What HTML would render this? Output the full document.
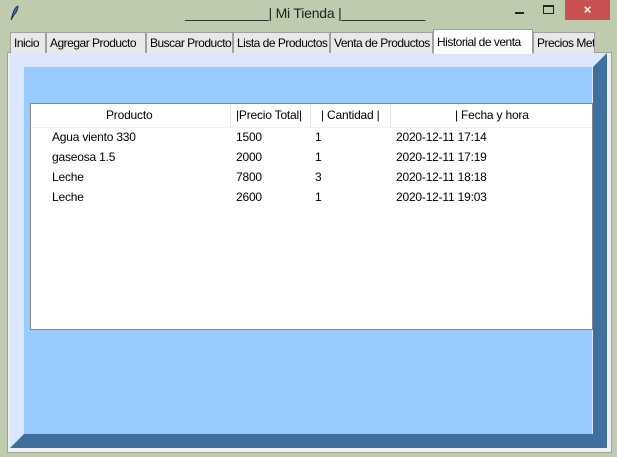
<!DOCTYPE html>
<html><head><style>
*{margin:0;padding:0;box-sizing:border-box}
body{width:617px;height:457px;background:#bfcbae;position:relative;overflow:hidden;font-family:"Liberation Sans",sans-serif;font-size:12px;color:#000}
.a{position:absolute}
.tab{position:absolute;top:32px;height:21px;background:#e8e8e8;border:1px solid #a0a0a0;border-bottom:none;font-size:12px;line-height:20px;padding-left:3px;white-space:nowrap;overflow:hidden;letter-spacing:-0.5px}
.cell{position:absolute;white-space:nowrap;font-size:12px;letter-spacing:-0.2px}
</style></head><body>
<div class="a" style="left:8px;top:5px;width:12px;height:16px">
<svg width="12" height="16"><path d="M3 15 L5 8 Q7 2 10 1 Q10 6 6 10 Z" fill="#3a6fc0" stroke="#102040" stroke-width="0.8"/></svg></div>
<div class="a" style="left:185px;top:5px;font-size:14px;color:#222;white-space:nowrap;letter-spacing:-0.2px">___________| Mi Tienda |___________</div>
<div class="a" style="left:515px;top:12px;width:9px;height:2px;background:#222"></div>
<div class="a" style="left:543px;top:5px;width:11px;height:9px;border:1px solid #222;border-top-width:2px"></div>
<div class="a" style="left:565px;top:0;width:45px;height:20px;background:#c75050;color:#fff;text-align:center;font-size:13px;line-height:20px;font-weight:bold">×</div>
<div class="a" style="left:7px;top:52px;width:605px;height:401px;background:#f0f0f0;border:1px solid #a0a0a0"></div>
<div class="tab" style="left:10px;width:36px">Inicio</div>
<div class="tab" style="left:46px;width:100px">Agregar Producto</div>
<div class="tab" style="left:146px;width:87px">Buscar Producto</div>
<div class="tab" style="left:233px;width:97px">Lista de Productos</div>
<div class="tab" style="left:330px;width:103px">Venta de Productos</div>
<div class="tab" style="left:433px;top:29px;height:25px;width:100px;background:#fff;line-height:24px;z-index:2">Historial de venta</div>
<div class="tab" style="left:533px;width:62px">Precios Metro</div>
<div class="a" style="left:10px;top:53px;width:597px;height:395px;background:#dbe6ff"></div>
<div class="a" style="left:10px;top:53px;width:597px;height:395px;background:#3f6f9f;clip-path:polygon(100% 0,100% 100%,0 100%,14px calc(100% - 14px),calc(100% - 14px) calc(100% - 14px),calc(100% - 14px) 14px)"></div>
<div class="a" style="left:24px;top:67px;width:568px;height:367px;background:#99caff"></div>
<div class="a" style="left:30px;top:103px;width:563px;height:227px;background:#fff;border:1px solid #868686"></div>
<div class="a" style="left:31px;top:127px;width:561px;height:1px;background:#eaf0fa"></div>
<div class="a" style="left:230px;top:104px;width:1px;height:23px;background:#e5e5e5"></div>
<div class="a" style="left:310px;top:104px;width:1px;height:23px;background:#e5e5e5"></div>
<div class="a" style="left:390px;top:104px;width:1px;height:23px;background:#e5e5e5"></div>
<div class="cell" style="left:106px;top:108px">Producto</div>
<div class="cell" style="left:236px;top:108px">|Precio Total|</div>
<div class="cell" style="left:321px;top:108px">| Cantidad |</div>
<div class="cell" style="left:455px;top:108px">| Fecha y hora</div>
<div class="cell" style="left:52px;top:130px">Agua viento 330</div>
<div class="cell" style="left:236px;top:130px">1500</div>
<div class="cell" style="left:315px;top:130px">1</div>
<div class="cell" style="left:396px;top:130px">2020-12-11 17:14</div>
<div class="cell" style="left:52px;top:150px">gaseosa 1.5</div>
<div class="cell" style="left:236px;top:150px">2000</div>
<div class="cell" style="left:315px;top:150px">1</div>
<div class="cell" style="left:396px;top:150px">2020-12-11 17:19</div>
<div class="cell" style="left:52px;top:170px">Leche</div>
<div class="cell" style="left:236px;top:170px">7800</div>
<div class="cell" style="left:315px;top:170px">3</div>
<div class="cell" style="left:396px;top:170px">2020-12-11 18:18</div>
<div class="cell" style="left:52px;top:190px">Leche</div>
<div class="cell" style="left:236px;top:190px">2600</div>
<div class="cell" style="left:315px;top:190px">1</div>
<div class="cell" style="left:396px;top:190px">2020-12-11 19:03</div>
</body></html>
